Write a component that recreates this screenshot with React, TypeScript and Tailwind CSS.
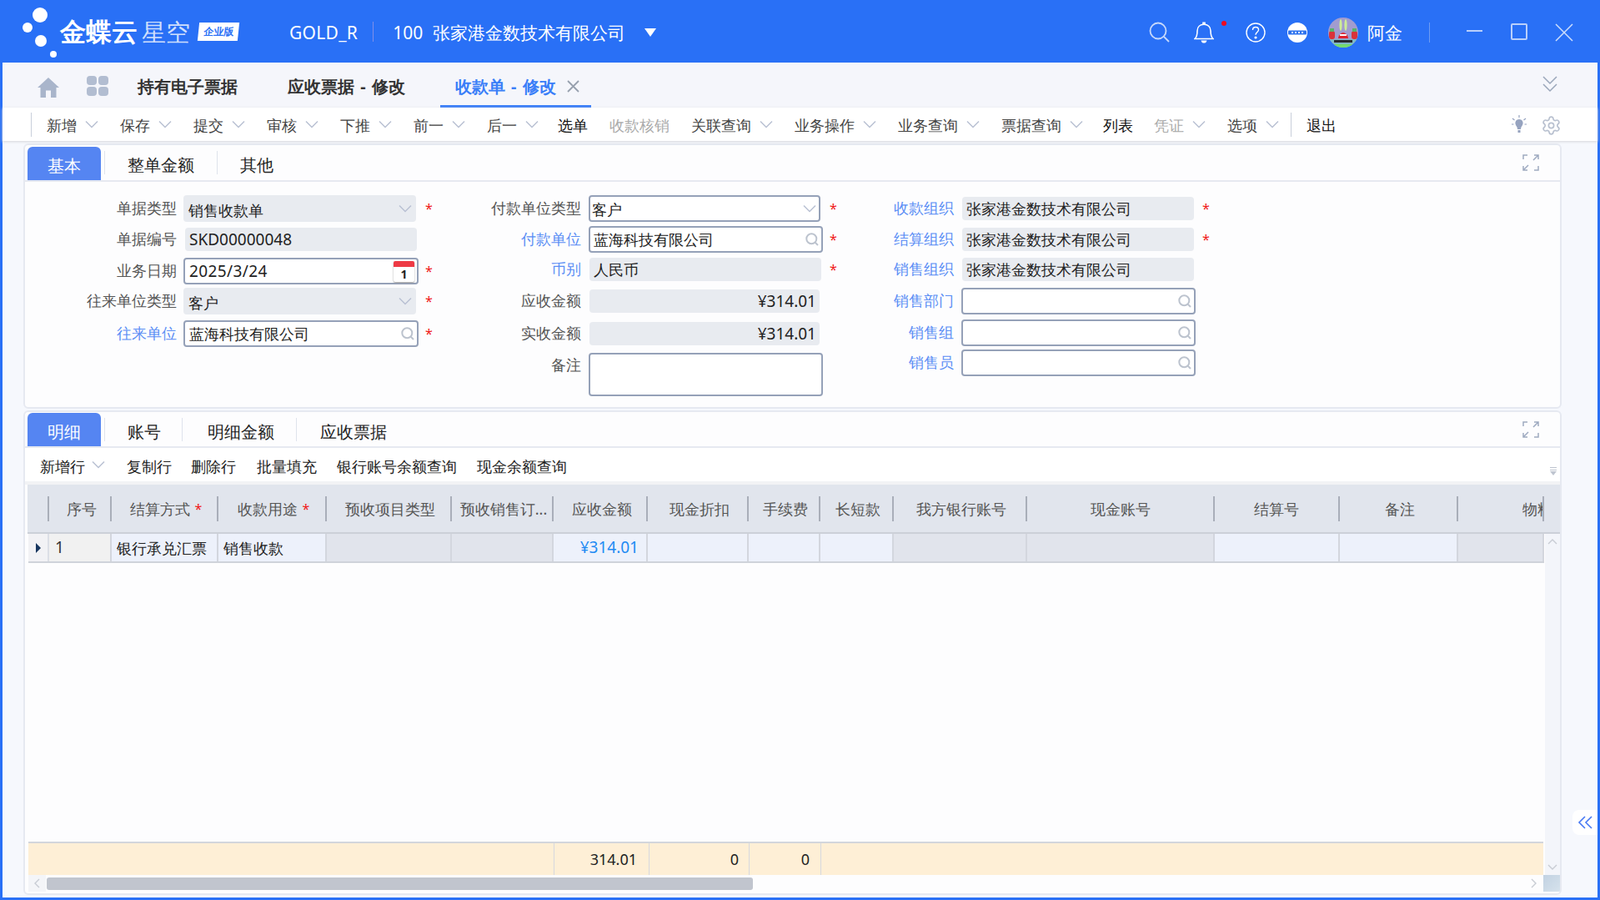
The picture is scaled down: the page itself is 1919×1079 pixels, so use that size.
import React from "react";
import { Settings } from "lucide-react";

const Chev = ({ cls = "ml-[10px]", color = "#b9c1d3" }: { cls?: string; color?: string }) => (
  <svg viewBox="0 0 16 10" className={"w-[16px] h-[10px] shrink-0 " + cls} fill="none" stroke={color} strokeWidth="1.5">
    <path d="M1 1.5 L8 8.5 L15 1.5" />
  </svg>
);
const Search = ({ cls = "" }: { cls?: string }) => (
  <svg viewBox="0 0 16 16" className={"w-[16px] h-[16px] shrink-0 " + cls} fill="none" stroke="#bcc3ce" strokeWidth="2">
    <circle cx="7.3" cy="7.3" r="6" />
    <path d="M11.5 11.5 L15 15" />
  </svg>
);
const Expand = () => (
  <svg viewBox="0 0 20 20" className="w-[20px] h-[20px]" fill="none" stroke="#9eaac0" strokeWidth="1.5">
    <path d="M1 6V1H6M19 1L13 7M14 1H19V6M1 14V19H6M1 19L7 13M14 19H19V14" />
  </svg>
);
const Star = ({ cls = "" }: { cls?: string }) => <span className={"text-[#f01818] text-[16px] leading-none w-[10px] shrink-0 " + cls}>*</span>;

const Label = ({ text, blue, w }: { text: string; blue?: boolean; w: string }) => (
  <div className={"text-right text-[18px] leading-none whitespace-nowrap shrink-0 -translate-y-[1px] " + w + " " + (blue ? "text-[#5c8ff5]" : "text-[#555]")}>{text}</div>
);

const Gray = ({ cls, children }: { cls: string; children?: React.ReactNode }) => (
  <div className={"bg-[#e8ebf0] rounded-[4px] flex items-center text-[18px] text-[#222] leading-none " + cls}>{children}</div>
);
const Input = ({ cls, children }: { cls: string; children?: React.ReactNode }) => (
  <div className={"bg-white border-2 border-[#95a1b8] rounded-[4px] flex items-center text-[18px] text-[#222] leading-none " + cls}>{children}</div>
);

const Logo = () => (
  <div className="flex items-center h-full">
    <svg viewBox="0 0 72 75" className="w-[72px] h-[75px] shrink-0" fill="#fff">
      <circle cx="48" cy="18" r="9" />
      <circle cx="33" cy="33" r="6" />
      <circle cx="49" cy="49" r="7" />
      <circle cx="64" cy="65" r="4" />
    </svg>
    <span className="text-[31px] font-bold text-white leading-none whitespace-nowrap">金蝶云</span>
    <span className="ml-[5px] text-[29px] font-light text-[#cfdffc] leading-none whitespace-nowrap">星空</span>
    <div className="ml-[10px] w-[48px] h-[22px] bg-white -skew-x-6 flex items-center justify-center">
      <span className="text-[12px] font-bold text-[#2970f6] leading-none whitespace-nowrap">企业版</span>
    </div>
  </div>
);

const Avatar = () => (
  <svg viewBox="0 0 36 36" className="w-[36px] h-[36px] shrink-0 ml-[25px]">
    <clipPath id="av"><circle cx="18" cy="18" r="18" /></clipPath>
    <g clipPath="url(#av)">
      <rect width="36" height="36" fill="#a29ccf" />
      <rect y="26" width="36" height="10" fill="#7fb8c4" />
      <ellipse cx="15" cy="9" rx="1.600" ry="7" fill="#cdeb98" />
      <ellipse cx="21" cy="9" rx="1.600" ry="7" fill="#cdeb98" />
      <path d="M12 25 C13 16 23 16 24 25 Z" fill="#e0232d" />
      <rect x="14" y="20" width="8" height="2" fill="#fff" />
      <rect x="1" y="16" width="7" height="10" rx="3" fill="#d9333a" />
      <rect x="28" y="16" width="7" height="10" rx="3" fill="#d9333a" />
      <rect x="2" y="13" width="5" height="4" fill="#57b36a" />
      <rect x="29" y="13" width="5" height="4" fill="#57b36a" />
      <rect x="7" y="27" width="22" height="3" fill="#2a2a32" />
      <rect x="5" y="32" width="26" height="4" fill="#74dc6d" />
    </g>
  </svg>
);

const TopBar = () => (
  <div className="h-[75px] shrink-0 flex items-center bg-[#2970f6] text-white">
    <Logo />
    <span className="ml-[61px] text-[21px] leading-none whitespace-nowrap translate-y-[2px] tracking-[0.3px]">GOLD_R</span>
    <div className="ml-[18px] w-px h-[24px] bg-[#7f8fe8]" />
    <span className="ml-[23px] text-[21px] leading-none whitespace-nowrap translate-y-[2px]">100</span>
    <span className="ml-[12px] text-[21px] leading-none whitespace-nowrap translate-y-[2px]">张家港金数技术有限公司</span>
    <svg viewBox="0 0 14 10" className="ml-[23px] w-[14px] h-[10px] translate-y-[1px]" fill="#fff"><path d="M0 0H14L7 10Z" /></svg>
    <div className="ml-auto flex items-center pr-[32px] translate-y-[1px]">
      <svg viewBox="0 0 25 25" className="w-[25px] h-[25px]" fill="none" stroke="#c5d8fb" strokeWidth="1.8">
        <circle cx="11" cy="11" r="9.5" /><path d="M18 18L24 24" />
      </svg>
      <div className="relative ml-[29px] w-[24px] h-[26px]">
        <svg viewBox="0 0 24 26" className="w-[24px] h-[26px]" fill="none" stroke="#fff" strokeWidth="1.6">
          <path d="M1 20.5H23C20 18 20 15 20 11C20 6 16.5 3.3 12 3.3C7.5 3.3 4 6 4 11C4 15 4 18 1 20.5Z" />
          <path d="M11 3V1.2H13V3" />
          <path d="M8.5 22.5H15.5C15 25 13.5 25.5 12 25.5C10.5 25.5 9 25 8.5 22.5Z" fill="#fff" stroke="none" />
        </svg>
        <div className="absolute left-[33px] top-[-1px] w-[6px] h-[6px] rounded-full bg-[#ee0a1e]" />
      </div>
      <svg viewBox="0 0 24 24" className="ml-[38px] w-[24px] h-[24px]" fill="none" stroke="#fff" strokeWidth="1.4">
        <circle cx="12" cy="12" r="11" />
        <path d="M8.5 9C8.5 6.8 10 5.5 12 5.5C14 5.5 15.5 6.8 15.5 8.8C15.5 11.5 12 11.5 12 14.8" />
        <circle cx="12" cy="18" r="0.9" fill="#fff" />
      </svg>
      <svg viewBox="0 0 24 24" className="ml-[26px] w-[24px] h-[24px]">
        <circle cx="12" cy="12" r="12" fill="#fff" />
        <rect x="1" y="9.5" width="22" height="5" rx="1" fill="#2f74ef" />
        <g fill="#d9e6fd"><rect x="5" y="11" width="2" height="2" /><rect x="9" y="11" width="2" height="2" /><rect x="13" y="11" width="2" height="2" /><rect x="17" y="11" width="2" height="2" /></g>
      </svg>
      <Avatar />
      <span className="ml-[11px] text-[21px] leading-none whitespace-nowrap translate-y-[1px]">阿金</span>
      <div className="ml-[32px] w-px h-[24px] bg-[#6f9cf2]" />
      <div className="ml-[44px] w-[19px] h-[2px] -mt-[4px] bg-[#b9cffb]" />
      <div className="ml-[34px] w-[20px] h-[20px] -mt-[2px] border-2 border-[#b9cffb] rounded-[2px]" />
      <svg viewBox="0 0 22 22" className="ml-[33px] w-[22px] h-[22px]" fill="none" stroke="#cfdffc" strokeWidth="1.5"><path d="M1 1L21 21M21 1L1 21" /></svg>
    </div>
  </div>
);

const Dash = () => <span className="mx-[2px]">-</span>;

const TabRow = () => (
  <div className="h-[54px] shrink-0 flex items-center bg-[#f5f6fb] pl-[42px] pr-[48px]">
    <svg viewBox="0 0 26 24" className="w-[26px] h-[24px] shrink-0 mt-[6px]" fill="#a9b5cb">
      <path d="M13 0L26 12H22.5V24H16V15.5H10V24H3.5V12H0Z" />
    </svg>
    <div className="ml-[33px] grid grid-cols-2 gap-[2px] w-[26px] h-[24px] mt-[2px] shrink-0">
      <div className="bg-[#b2bdd1] rounded-[4px]" /><div className="bg-[#b2bdd1] rounded-[4px]" />
      <div className="bg-[#b2bdd1] rounded-[4px]" /><div className="bg-[#b2bdd1] rounded-[4px]" />
    </div>
    <span className="ml-[35px] mt-[4px] text-[20px] font-bold text-[#333] leading-none whitespace-nowrap">持有电子票据</span>
    <span className="ml-[60px] mt-[4px] text-[20px] font-bold text-[#333] leading-none whitespace-nowrap">应收票据 <Dash /> 修改</span>
    <div className="ml-[42px] h-full pl-[18px] pr-[14px] flex items-center border-b-[3px] border-[#3a7ef8]">
      <span className="mt-[6px] text-[20px] font-bold text-[#3a7ef8] leading-none whitespace-nowrap">收款单 <Dash /> 修改</span>
      <svg viewBox="0 0 15 15" className="ml-[13px] mt-[6px] w-[15px] h-[15px]" fill="none" stroke="#97a0ae" strokeWidth="1.8"><path d="M1 1L14 14M14 1L1 14" /></svg>
    </div>
    <svg viewBox="0 0 18 20" className="ml-auto w-[18px] h-[20px] -mt-[2px]" fill="none" stroke="#9aa6ba" strokeWidth="1.5"><path d="M1 1L9 9L17 1M1 10L9 18L17 10" /></svg>
  </div>
);

const TItem = ({ t, chev = true, c = "text-[#444]", cls = "" }: { t: string; chev?: boolean; c?: string; cls?: string }) => (
  <div className={"flex items-center mr-[26px] shrink-0 " + cls}>
    <span className={"text-[18px] leading-none whitespace-nowrap translate-y-[1px] " + c}>{t}</span>
    {chev && <Chev />}
  </div>
);

const Toolbar = () => (
  <div className="h-[40px] shrink-0 flex items-center bg-white shadow-[0_1px_3px_#d4d6da] pl-[34px] pr-[43px] relative">
    <div className="w-px h-[29px] bg-[#c9cfdb] mr-[18px]" />
    <TItem t="新增" />
    <TItem t="保存" />
    <TItem t="提交" />
    <TItem t="审核" />
    <TItem t="下推" />
    <TItem t="前一" />
    <TItem t="后一" />
    <TItem t="选单" chev={false} c="text-[#111]" cls="-ml-[3px]" />
    <TItem t="收款核销" chev={false} c="text-[#aaa]" />
    <TItem t="关联查询" />
    <TItem t="业务操作" />
    <TItem t="业务查询" />
    <TItem t="票据查询" />
    <TItem t="列表" chev={false} c="text-[#111]" cls="-ml-[2px]" />
    <TItem t="凭证" c="text-[#aaa]" cls="-ml-[1px]" />
    <TItem t="选项" />
    <div className="w-px h-[29px] bg-[#c9cfdb] -ml-[12px] mr-[18px]" />
    <span className="text-[18px] text-[#111] leading-none whitespace-nowrap translate-y-[1px]">退出</span>
    <svg viewBox="0 0 20 24" className="ml-auto w-[20px] h-[24px]" fill="#96a3bf">
      <path d="M10 6C6.5 6 5 9 5.5 11.5C6 14 8 15 8 18H12C12 15 14 14 14.5 11.5C15 9 13.5 6 10 6Z" />
      <rect x="8.5" y="19" width="3" height="3" />
      <path d="M10 1V4M2 5L4.5 7M18 5L15.500 7M1 12H3.500M19 12H16.500" stroke="#96a3bf" strokeWidth="1.2" />
    </svg>
    <Settings className="ml-[16px] w-[25px] h-[25px] translate-y-[1px]" color="#b8c0cf" strokeWidth={1.6} />
  </div>
);

const Tab = ({ t, active, cls = "" }: { t: string; active?: boolean; cls?: string }) => (
  <div className={"h-[40px] pt-[6px] flex items-center justify-center text-[20px] leading-none whitespace-nowrap shrink-0 " + cls + " " + (active ? "bg-[#5585f2] text-white rounded-t-[6px] w-[88px]" : "text-[#222]")}>{t}</div>
);
const TabDiv = ({ cls }: { cls: string }) => <div className={"w-px h-[28px] bg-[#dfe3ec] shrink-0 " + cls} />;

const Calendar = () => (
  <div className="ml-auto mr-[3px] w-[25px] h-[25px] bg-white rounded-[2px] shadow-[0_1px_2px_#999] flex flex-col overflow-hidden">
    <div className="h-[7px] bg-[#ee3a45] shrink-0" />
    <div className="flex-1 flex items-center justify-center text-[14px] font-bold text-[#222] leading-none">1</div>
  </div>
);

const Form = () => (
  <div className="flex pt-[16px] flex-1">
    {/* first column */}
    <div className="w-[517px] shrink-0 flex flex-col">
      <div className="h-[32px] flex items-center"><Label w="w-[182px]" text="单据类型" />
        <div className="w-[298px] shrink-0"><Gray cls="ml-[8px] w-[279px] h-[32px] pl-[6px] pr-[5px] justify-between"><span className="mt-[3px]">销售收款单</span><Chev /></Gray></div><Star />
      </div>
      <div className="h-[28px] mt-[7px] flex items-center"><Label w="w-[182px]" text="单据编号" />
        <Gray cls="ml-[10px] w-[278px] h-[28px] pl-[5px]"><span className="text-[19px]">SKD00000048</span></Gray>
      </div>
      <div className="h-[32px] mt-[8px] flex items-center"><Label w="w-[182px]" text="业务日期" />
        <div className="w-[298px] shrink-0"><Input cls="ml-[8px] w-[282px] h-[32px] pl-[5px]"><span className="text-[19px] tracking-[0.4px]">2025/3/24</span><Calendar /></Input></div><Star />
      </div>
      <div className="h-[32px] mt-[4px] flex items-center"><Label w="w-[182px]" text="往来单位类型" />
        <div className="w-[298px] shrink-0"><Gray cls="ml-[8px] w-[279px] h-[32px] pl-[6px] pr-[5px] justify-between"><span className="mt-[3px]">客户</span><Chev /></Gray></div><Star />
      </div>
      <div className="h-[32px] mt-[7px] flex items-center"><Label blue w="w-[182px]" text="往来单位" />
        <div className="w-[298px] shrink-0"><Input cls="ml-[8px] w-[282px] h-[32px] pl-[5px] pr-[3px] justify-between">蓝海科技有限公司<Search /></Input></div><Star />
      </div>
    </div>
    {/* second column */}
    <div className="w-[477px] shrink-0 flex flex-col">
      <div className="h-[32px] flex items-center"><Label w="w-[150px]" text="付款单位类型" />
        <div className="w-[298px] shrink-0"><Input cls="ml-[9px] w-[278px] h-[32px] pl-[2px] pr-[3px] justify-between"><span className="mt-[2px]">客户</span><Chev cls="" /></Input></div><Star />
      </div>
      <div className="h-[32px] mt-[5px] flex items-center"><Label blue w="w-[150px]" text="付款单位" />
        <div className="w-[298px] shrink-0"><Input cls="ml-[9px] w-[281px] h-[32px] pl-[4px] pr-[3px] justify-between">蓝海科技有限公司<Search /></Input></div><Star />
      </div>
      <div className="h-[28px] mt-[6px] flex items-center"><Label blue w="w-[150px]" text="币别" />
        <div className="w-[298px] shrink-0"><Gray cls="ml-[10px] w-[278px] h-[28px] pl-[5px]">人民币</Gray></div><Star />
      </div>
      <div className="h-[28px] mt-[10px] flex items-center"><Label w="w-[150px]" text="应收金额" />
        <Gray cls="ml-[10px] w-[276px] h-[28px] pr-[4px] justify-end"><span className="text-[19px]">¥314.01</span></Gray>
      </div>
      <div className="h-[28px] mt-[11px] flex items-center"><Label w="w-[150px]" text="实收金额" />
        <Gray cls="ml-[10px] w-[276px] h-[28px] pr-[4px] justify-end"><span className="text-[19px]">¥314.01</span></Gray>
      </div>
      <div className="h-[52px] mt-[9px] flex items-start"><div className="pt-[6px]"><Label w="w-[150px]" text="备注" /></div>
        <Input cls="ml-[9px] w-[281px] h-[52px]" />
      </div>
    </div>
    {/* third column */}
    <div className="w-[440px] shrink-0 flex flex-col pt-[2px]">
      <div className="h-[28px] flex items-center"><Label blue w="w-[120px]" text="收款组织" />
        <div className="w-[298px] shrink-0"><Gray cls="ml-[10px] w-[278px] h-[28px] pl-[5px]">张家港金数技术有限公司</Gray></div><Star />
      </div>
      <div className="h-[28px] mt-[9px] flex items-center"><Label blue w="w-[120px]" text="结算组织" />
        <div className="w-[298px] shrink-0"><Gray cls="ml-[10px] w-[278px] h-[28px] pl-[5px]">张家港金数技术有限公司</Gray></div><Star />
      </div>
      <div className="h-[28px] mt-[8px] flex items-center"><Label blue w="w-[120px]" text="销售组织" />
        <Gray cls="ml-[10px] w-[278px] h-[28px] pl-[5px]">张家港金数技术有限公司</Gray>
      </div>
      <div className="h-[32px] mt-[8px] flex items-center"><Label blue w="w-[120px]" text="销售部门" />
        <Input cls="ml-[9px] w-[281px] h-[32px] pr-[3px] justify-end"><Search /></Input>
      </div>
      <div className="h-[32px] mt-[6px] flex items-center"><Label blue w="w-[120px]" text="销售组" />
        <Input cls="ml-[9px] w-[281px] h-[32px] pr-[3px] justify-end"><Search /></Input>
      </div>
      <div className="h-[32px] mt-[4px] flex items-center"><Label blue w="w-[120px]" text="销售员" />
        <Input cls="ml-[9px] w-[281px] h-[32px] pr-[3px] justify-end"><Search /></Input>
      </div>
    </div>
  </div>
);

const Head = ({ w, t, req, cls = "justify-center pl-[4px]" }: { w: string; t?: string; req?: boolean; cls?: string }) => (
  <div className={"h-[30px] shrink-0 border-r-2 border-[#a9aeb9] flex items-center text-[18px] text-[#555] leading-none whitespace-nowrap overflow-hidden " + w + " " + cls}>
    {t}
    {req && <span className="text-[#f01818] ml-[6px] text-[16px]">*</span>}
  </div>
);
const Cell = ({ w, g, cls = "", children }: { w: string; g?: boolean; cls?: string; children?: React.ReactNode }) => (
  <div className={"h-full shrink-0 border-r-2 border-[#d3d6de] flex items-center text-[18px] leading-none whitespace-nowrap " + w + " " + (g ? "bg-[#e1e4ec] " : "bg-[#edf1fb] ") + cls}>{children}</div>
);

const Grid = () => (
  <div className="flex-1 flex flex-col min-h-0">
    <div className="h-[59px] ml-[3px] shrink-0 flex items-center bg-[#e1e5ed] border-b-2 border-[#ccd0d8] pl-[2px]">
      <Head w="w-[24px]" />
      <Head w="w-[75px]" t="序号" />
      <Head w="w-[128px]" t="结算方式" req />
      <Head w="w-[130px]" t="收款用途" req />
      <Head w="w-[150px]" t="预收项目类型" />
      <Head w="w-[122px]" t="预收销售订..." />
      <Head w="w-[113px]" t="应收金额" />
      <Head w="w-[121px]" t="现金折扣" />
      <Head w="w-[86px]" t="手续费" />
      <Head w="w-[88px]" t="长短款" />
      <Head w="w-[160px]" t="我方银行账号" />
      <Head w="w-[225px]" t="现金账号" cls="justify-center" />
      <Head w="w-[150px]" t="结算号" cls="justify-center" />
      <Head w="w-[142px]" t="备注" />
      <Head w="w-[103px]" t="物料" cls="justify-start pl-[77px]" />
    </div>
    <div className="flex ml-[4px] h-[409px] shrink-0">
      <div className="w-[1818px] shrink-0 flex flex-col">
        <div className="h-[35px] shrink-0 flex border-b-2 border-[#cfd3da] bg-[#e1e4ec]">
          <div className="w-[25px] h-full bg-[#f2f2f5] border-r-2 border-[#dcdfe6] flex items-center justify-center shrink-0">
            <svg viewBox="0 0 6 12" className="w-[6px] h-[12px]" fill="#17365f"><path d="M0 0L6 6L0 12Z" /></svg>
          </div>
          <Cell w="w-[75px]" cls="!bg-[#f1f1f1] pl-[7px] text-[#333]"><span className="text-[19px]">1</span></Cell>
          <Cell w="w-[128px]" cls="pl-[6px] text-[#222]">银行承兑汇票</Cell>
          <Cell w="w-[130px]" cls="pl-[6px] text-[#222]">销售收款</Cell>
          <Cell w="w-[150px]" g />
          <Cell w="w-[122px]" g />
          <Cell w="w-[113px]" cls="justify-end pr-[9px] text-[#1f8bf3]"><span className="text-[19px]">¥314.01</span></Cell>
          <Cell w="w-[121px]" />
          <Cell w="w-[86px]" />
          <Cell w="w-[88px]" />
          <Cell w="w-[160px]" g />
          <Cell w="w-[225px]" g />
          <Cell w="w-[150px]" />
          <Cell w="w-[142px]" />
          <Cell w="w-[103px]" g />
        </div>
        <div className="flex-1 bg-[#fdfdfe]" />
        <div className="h-[40px] w-[1817px] shrink-0 flex bg-[#feefd6] border-t-2 border-[#d3d6dc] text-[18px] text-[#222] leading-none">
          <div className="w-[631px] h-full border-r border-[#d6d8de] shrink-0" />
          <div className="w-[114px] h-full border-r border-[#d6d8de] flex items-center justify-end pr-[14px] shrink-0">314.01</div>
          <div className="w-[120px] h-full border-r border-[#d6d8de] flex items-center justify-end pr-[12px] shrink-0">0</div>
          <div className="w-[86px] h-full border-r border-[#d6d8de] flex items-center justify-end pr-[13px] shrink-0">0</div>
        </div>
      </div>
      <div className="ml-px w-[18px] shrink-0 bg-[#f3f5fa] flex flex-col items-center justify-between pt-[6px] pb-[6px]">
        <svg viewBox="0 0 12 7" className="w-[12px] h-[7px]" fill="none" stroke="#c8ccd4" strokeWidth="1.4"><path d="M1 6L6 1L11 6" /></svg>
        <svg viewBox="0 0 12 7" className="w-[12px] h-[7px]" fill="none" stroke="#c8ccd4" strokeWidth="1.4"><path d="M1 1L6 6L11 1" /></svg>
      </div>
    </div>
    <div className="h-[20px] ml-[4px] shrink-0 flex items-center">
      <div className="w-[21px] h-full bg-[#f4f5f8] flex items-center justify-center shrink-0">
        <svg viewBox="0 0 7 12" className="w-[7px] h-[12px]" fill="none" stroke="#c8ccd4" strokeWidth="1.4"><path d="M6 1L1 6L6 11" /></svg>
      </div>
      <div className="ml-px w-[847px] h-[15px] bg-[#c1c5ce] rounded-[3px] shrink-0" />
      <svg viewBox="0 0 7 12" className="ml-auto mr-[8px] w-[7px] h-[12px]" fill="none" stroke="#c8ccd4" strokeWidth="1.4"><path d="M1 1L6 6L1 11" /></svg>
      <div className="w-[20px] h-full bg-gradient-to-br from-[#c2d2e2] to-[#d6e2ec] shrink-0" />
    </div>
  </div>
);

export default function App() {
  return (
    <div className="w-[1919px] h-[1079px] overflow-hidden flex flex-col bg-[#2970f6] font-['Inter','Noto_Sans_CJK_SC',sans-serif]">
      <TopBar />
      <div className="relative flex-1 min-h-0 ml-[3px] mr-[3px] mb-[3px] bg-[#f6f8fd] flex flex-col">
        <TabRow />
        <Toolbar />
        <div className="flex-1 min-h-0 pl-[25px] pt-[3px] flex flex-col">
          <div className="w-[1845px] h-[318px] shrink-0 border-2 border-[#e6e9f1] rounded-[6px] bg-[#fdfdfe] flex flex-col">
            <div className="h-[44px] shrink-0 border-b-2 border-[#e6e9f1] flex items-center pl-[3px] pr-[25px]">
              <Tab t="基本" active cls="mt-[2px]" />
              <TabDiv cls="ml-[4px]" />
              <Tab t="整单金额" cls="ml-[27px]" />
              <TabDiv cls="ml-[27px]" />
              <Tab t="其他" cls="ml-[27px]" />
              <div className="ml-auto"><Expand /></div>
            </div>
            <Form />
          </div>
          <div className="w-[1845px] mt-[2px] h-[581px] shrink-0 border-2 border-[#e6e9f1] rounded-[6px] bg-[#fdfdfe] flex flex-col overflow-hidden">
            <div className="h-[43px] shrink-0 border-b-2 border-[#e6e9f1] flex items-center pl-[3px] pr-[25px]">
              <Tab t="明细" active cls="mt-[1px]" />
              <TabDiv cls="ml-[4px]" />
              <Tab t="账号" cls="ml-[27px]" />
              <TabDiv cls="ml-[25px]" />
              <Tab t="明细金额" cls="ml-[30px]" />
              <TabDiv cls="ml-[26px]" />
              <Tab t="应收票据" cls="ml-[28px]" />
              <div className="ml-auto"><Expand /></div>
            </div>
            <div className="h-[40px] shrink-0 bg-white flex items-center pl-[18px] pr-[4px] text-[18px] text-[#222] leading-none whitespace-nowrap">
              <span className="translate-y-[2px]">新增行</span><Chev cls="ml-[8px]" />
              <span className="ml-[26px] translate-y-[2px]">复制行</span>
              <span className="ml-[23px] translate-y-[2px]">删除行</span>
              <span className="ml-[25px] translate-y-[2px]">批量填充</span>
              <span className="ml-[24px] translate-y-[2px]">银行账号余额查询</span>
              <span className="ml-[24px] translate-y-[2px]">现金余额查询</span>
              <svg viewBox="0 0 8 10" className="ml-auto mt-[16px] w-[8px] h-[10px]" fill="#bfc5d0"><rect width="8" height="1" /><rect y="3" width="8" height="1" /><path d="M0 5H8L4 10Z" /></svg>
            </div>
            <div className="h-[4px] shrink-0 bg-[#f2f3f5]" />
            <Grid />
          </div>
        </div>
        <div className="absolute right-0 top-[896px] w-[30px] h-[30px] bg-white rounded-l-[8px] flex items-center justify-center">
          <svg viewBox="0 0 18 16" className="w-[18px] h-[16px]" fill="none" stroke="#4678f3" strokeWidth="1.6"><path d="M9 1L2 8L9 15M17 1L10 8L17 15" /></svg>
        </div>
      </div>
    </div>
  );
}
